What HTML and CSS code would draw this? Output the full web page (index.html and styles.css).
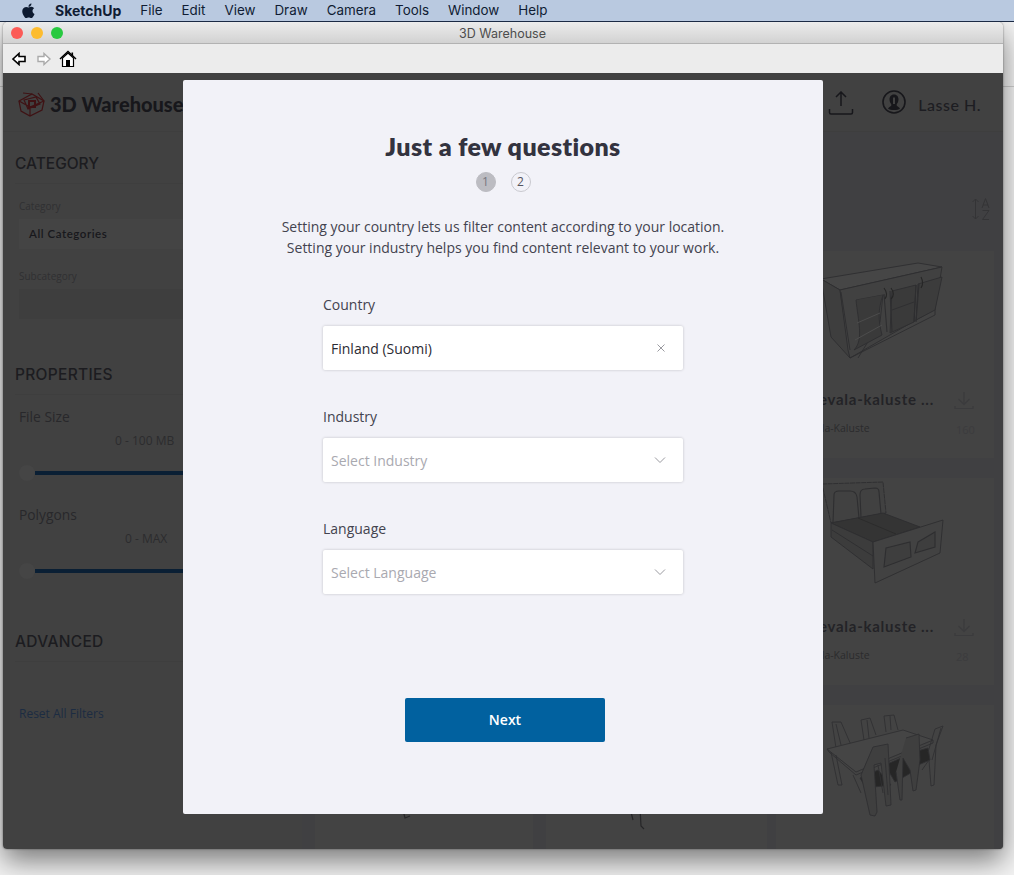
FILE: index.html
```html
<!DOCTYPE html>
<html lang="en">
<head>
<meta charset="utf-8">
<title>3D Warehouse</title>
<link rel="stylesheet" href="styles.css">
</head>
<body>
<nav class="menubar">
  <svg class="apple" viewBox="3 2.5 17 18.5"><path d="M17.05 20.28c-.98.95-2.05.8-3.08.35-1.09-.46-2.09-.48-3.24 0-1.44.62-2.2.44-3.06-.35C2.79 15.25 3.51 7.59 9.05 7.31c1.35.07 2.29.74 3.08.8 1.18-.24 2.31-.93 3.57-.84 1.51.12 2.65.72 3.4 1.8-3.12 1.87-2.38 5.98.48 7.13-.57 1.5-1.31 2.99-2.54 4.09zM12.03 7.25c-.15-2.23 1.66-4.07 3.74-4.25.29 2.58-2.34 4.5-3.74 4.25z"/></svg>
  <b class="menu-app">SketchUp</b>
  <span>File</span><span>Edit</span><span>View</span><span>Draw</span><span>Camera</span><span>Tools</span><span>Window</span><span>Help</span>
</nav>

<div class="window">
  <div class="titlebar">
    <div class="lights"><i class="light red"></i><i class="light yellow"></i><i class="light green"></i></div>
    <span class="title-text">3D Warehouse</span>
  </div>
  <div class="toolbar">
    <svg class="tool" width="14" height="14" viewBox="0 0 14 14"><path d="M1 7 7 1.500V4.500H13V9.500H7V12.500Z" fill="#fff" stroke="#000" stroke-width="1.600"/></svg>
    <svg class="tool tool-fwd" width="14" height="14" viewBox="0 0 14 14"><path d="M13 7 7 1.500V4.500H1V9.500H7V12.500Z" fill="#fff" stroke="#aaa" stroke-width="1.400"/></svg>
    <svg class="tool tool-home" width="18" height="18" viewBox="0 0 18 18"><path d="M1 9 9 1.500 17 9" fill="none" stroke="#000" stroke-width="1.500"/><path d="M3.500 8V16.500H14.500V8L9 3Z" fill="#fff" stroke="#000" stroke-width="1.200"/><rect x="7" y="10" width="4" height="6.500" fill="#000"/><rect x="12.500" y="2.500" width="1.600" height="3.500" fill="#000"/></svg>
  </div>

  <div class="page">
    <header class="site-header">
      <svg class="logo" width="30" height="28" viewBox="0 0 30 28" fill="none" stroke="#3f1214" stroke-width="1.200"><path d="M2 11 15 4 27 11 25 20 13 26 4 21Z"/><path d="M2 11 13 17 27 11M13 17V26M6 3 15 4M21 3 27 11M7 10 19 7 23 14 11 19Z"/><path d="M12 11H18V17H12Z" stroke-width="2"/></svg>
      <span class="logo-text">3D Warehouse</span>
      <div class="header-right">
        <svg width="26" height="24" viewBox="0 0 26 24" fill="none" stroke="#17171b" stroke-width="1.500"><path d="M13 1V15M8 6 13 1 18 6"/><path d="M1.500 18V21.500Q1.500 23 3 23H23Q24.500 23 24.500 21.500V18"/></svg>
        <svg class="avatar" width="24" height="24" viewBox="0 0 24 24"><circle cx="12" cy="12" r="11" fill="none" stroke="#17171b" stroke-width="1.600"/><path d="M12 4.500C8.800 4.500 7.500 7 7.500 9.500 7.500 12 9 13.500 9.500 15 9 16.500 7 17 6 18.500 8 20.500 16 20.500 18 18.500 17 17 15 16.500 14.500 15 15 13.500 16.500 12 16.500 9.500 16.500 7 15.200 4.500 12 4.500Z" fill="#17171b"/><path d="M11 7.500H13V14H11Z" fill="#414141"/></svg>
        <span class="user">Lasse H.</span>
      </div>
    </header>

    <div class="body-row">
      <aside class="sidebar">
        <h2 class="side-head">CATEGORY</h2>
        <div class="field-label">Category</div>
        <div class="side-select">All Categories</div>
        <div class="field-label field-label-2">Subcategory</div>
        <div class="side-select side-select-empty"></div>

        <h2 class="side-head side-head-props">PROPERTIES</h2>
        <div class="prop-label">File Size</div>
        <div class="prop-value">0 - 100 MB</div>
        <div class="slider"><i class="knob"></i><i class="track"></i></div>
        <div class="prop-label prop-label-2">Polygons</div>
        <div class="prop-value prop-value-2">0 - MAX</div>
        <div class="slider"><i class="knob"></i><i class="track"></i></div>

        <h2 class="side-head side-head-adv">ADVANCED</h2>
        <a class="reset">Reset All Filters</a>
      </aside>

      <main class="results">
        <div class="sort-row">
          <svg width="20" height="24" viewBox="0 0 20 24" fill="none" stroke="#343436" stroke-width="1"><path d="M4.500 2V22M1.500 5 4.500 2 7.500 5M1.500 19 4.500 22 7.500 19"/><path d="M11 11 14.500 1.500 18 11M12.200 8H16.800M11.500 13.500H18L11.500 22.500H18"/></svg>
        </div>
        <div class="grid">
          <article class="card"></article>
          <article class="card card-mid"></article>
          <article class="card">
            <svg class="thumb" viewBox="778 251 218 136" fill="none" stroke="#2e2e30" stroke-width=".9">
              <path d="M823 279 920 263 944 267 842 290Z" fill="#464646"/>
              <path d="M823 279 833 337 852 358 842 290Z" fill="#3e3e3e"/>
              <path d="M842 290 944 267 937 309 852 358 850 350Z" fill="#414141"/>
              <path d="M852 358 937 315 937 309M843 292 852 350M858 300 885 295 882 322 860 358"/>
              <path d="M858 300C860 320 866 340 856 350L884 335C880 320 880 310 885 295" fill="#3a3a3a"/>
              <path d="M859 323 882 313M857 340 884 325" stroke="#4e4e4e"/>
              <path d="M894 291 918 285 916 322 892 333Z" fill="#3a3a3a"/>
              <path d="M894 310 916 302M920 284 944 277 937 310 918 320Z" fill="#3c3c3c"/>
              <path d="M886 294 889 332M892 291 894 332M918 285 916 322M921 284 918 322" stroke-width="1.100"/>
              <path d="M886 288C889 292 889 296 887 299M893 288C896 292 896 296 893 299M923 277C925 281 925 285 923 288" stroke="#262626" stroke-width="1.100"/>
            </svg>
            <div class="meta"><div class="card-title">Sevala-kaluste ...</div><div class="card-author">Sevala-Kaluste</div>
              <svg class="dl" width="20" height="19" viewBox="0 0 20 19" fill="none" stroke="#3b3b3d" stroke-width="1.200"><path d="M10 1V13M4.500 8 10 13.500 15.500 8M1 15V17.500H19V15"/></svg>
              <div class="count">160</div>
            </div>
          </article>

          <article class="card"></article>
          <article class="card card-mid"></article>
          <article class="card">
            <svg class="thumb" viewBox="778 478 218 136" fill="none" stroke="#2e2e30" stroke-width=".9">
              <path d="M824 484 885 482 888 513 833 523Z" fill="#414141" stroke-dasharray="5 .6"/>
              <path d="M835 523 836 495Q836 491 841 491L852 491Q858 491 859 497L861 518M863 517 862 495Q862 489 867 489L877 488Q881 488 881 492L883 514" stroke-width="1.100"/>
              <path d="M833 523 885 513 922 527 875 542Z" fill="#343434"/>
              <path d="M860 518 898 534" stroke="#2a2a2a"/>
              <path d="M833 523 833 537 875 569 875 542Z" fill="#3c3c3c"/>
              <path d="M834 530 875 556"/>
              <path d="M875 542 945 520 942 553 877 583Z" fill="#424242"/>
              <path d="M888 548 912 542 913 557 886 567Z" fill="#3e3e3e" stroke-width="1.100"/>
              <path d="M920 542 937 532 937 547 917 553Z" fill="#3e3e3e" stroke-width="1.100"/>
            </svg>
            <div class="meta"><div class="card-title">Sevala-kaluste ...</div><div class="card-author">Sevala-Kaluste</div>
              <svg class="dl" width="20" height="19" viewBox="0 0 20 19" fill="none" stroke="#3b3b3d" stroke-width="1.200"><path d="M10 1V13M4.500 8 10 13.500 15.500 8M1 15V17.500H19V15"/></svg>
              <div class="count">28</div>
            </div>
          </article>

          <article class="card"><svg class="thumb" viewBox="315 705 218 136" fill="none" stroke="#262628" stroke-width="1.200"><path d="M403 810 405 818 410 816"/></svg></article>
          <article class="card card-mid"><svg class="thumb" viewBox="546 705 221 136" fill="none" stroke="#262628" stroke-width="1.200"><path d="M630 808 633 820M640 808 641 826 644 829"/></svg></article>
          <article class="card">
            <svg class="thumb" viewBox="778 705 218 136" fill="none" stroke="#303032" stroke-width=".9">
              <path d="M834 722 843 722 853 745M834 722 838 748M838 724 843 745M863 720 872 718 878 735M863 720 866 740M869 720 871 738M886 716 896 715 900 730M886 716 888 732M892 716 893 730"/>
              <path d="M829 749 905 730 935 740 858 772Z" fill="#454545"/>
              <path d="M829 749 831 752 858 775 935 743 935 740"/>
              <path d="M833 752 840 785 844 785 838 755M855 775 863 793"/>
              <path d="M862 778 880 770 893 785 868 788Z" fill="#262626"/>
              <path d="M887 765 910 755 918 770 897 782Z" fill="#262626"/>
              <path d="M916 752 930 748 932 760 920 765Z" fill="#262626"/>
              <path d="M875 747 890 744 893 805 888 806 883 763 876 765 879 812 877 816 872 815 863 775 875 747" fill="#3f3f3f"/>
              <path d="M880 765 885 793M887 758 890 795"/>
              <path d="M908 738 921 734 922 760 918 790 915 791 912 770 905 758 904 800 902 800 898 772" fill="#3f3f3f"/>
              <path d="M937 729 945 726 938 745 936 785 933 786 931 760 924 770"/>
              <path d="M937 729 930 752M943 728 934 760"/>
            </svg>
          </article>
        </div>
      </main>
    </div>

    <section class="modal">
      <h1 class="modal-title">Just a few questions</h1>
      <div class="steps"><span class="step step-on">1</span><span class="step">2</span></div>
      <p class="intro">Setting your country lets us filter content according to your location.<br>Setting your industry helps you find content relevant to your work.</p>
      <div class="form">
        <label class="form-label">Country</label>
        <div class="input input-value">Finland (Suomi)
          <svg width="10" height="10" viewBox="0 0 10 10" stroke="#9a9aa0" fill="none"><path d="M1.500 1.500 8.500 8.500M8.500 1.500 1.500 8.500"/></svg>
        </div>
        <label class="form-label">Industry</label>
        <div class="input">Select Industry
          <svg class="chev" width="12" height="8" viewBox="0 0 12 8" stroke="#9a9aa0" fill="none"><path d="M1 1.500 6 6.500 11 1.500"/></svg>
        </div>
        <label class="form-label">Language</label>
        <div class="input">Select Language
          <svg class="chev" width="12" height="8" viewBox="0 0 12 8" stroke="#9a9aa0" fill="none"><path d="M1 1.500 6 6.500 11 1.500"/></svg>
        </div>
      </div>
      <button class="next">Next</button>
    </section>
  </div>
</div>
</body>
</html>
```

FILE: styles.css
```css
* { box-sizing: border-box; }
html, body { height: 100%; }
body {
  margin: 0;
  height: 875px;
  overflow: hidden;
  background: linear-gradient(#cfcfcf, #cfcfcf) 0 86px / 100% 1px no-repeat, #f4f4f4;
  font-family: "Open Sans", "Noto Sans", sans-serif;
}
.menubar {
  position: relative;
  z-index: 1;
  height: 22px;
  background: #b9c9e0;
  border-bottom: 1px solid #1b2a44;
  display: flex;
  align-items: center;
  gap: 19px;
  padding-left: 21px;
  font: 13.400px/21px Inter, "Liberation Sans", sans-serif;
  color: #101c33;
}
.apple { width: 14px; height: 15px; fill: #0d1a30; margin-right: 1px; flex: none; }
.menu-app { font-weight: 700; font-size: 14px; }
.window {
  width: 1000px;
  height: 827px;
  margin-left: 3px;
  border-radius: 5px 5px 4px 4px;
  overflow: hidden;
  position: relative;
  box-shadow: 0 12px 28px rgba(0, 0, 0, .5), 0 0 2px rgba(0, 0, 0, .5);
}
.titlebar {
  height: 22px;
  background: linear-gradient(#ececec, #d2d2d2);
  border-bottom: 1px solid #b2b2b2;
  position: relative;
  display: flex;
  justify-content: center;
  align-items: center;
  padding: 2px 1px 0 0;
}
.lights { position: absolute; left: 8px; top: 5px; display: flex; gap: 8px; }
.light { width: 12px; height: 12px; border-radius: 50%; }
.red { background: #fc5b57; }
.yellow { background: #fdbc2e; }
.green { background: #28c940; }
.title-text { font: 12.500px Inter, "Liberation Sans", sans-serif; color: #4d4d4d; }
.toolbar {
  height: 29px;
  background: #ececec;
  display: flex;
  align-items: center;
  padding: 1px 0 0 9px;
}
.tool-fwd { margin-left: 11px; }
.tool-home { margin-left: 8px; }

.page { height: 776px; background: #414141; position: relative; overflow: hidden; }
.site-header {
  height: 59px;
  display: flex;
  align-items: center;
  padding: 4px 22px 0 14px;
  border-bottom: 1px solid #3e3e3e;
}
.logo { flex: none; }
.logo-text { font: 900 20px Lato, sans-serif; color: #17171b; margin-left: 3px; white-space: nowrap; }
.header-right { margin-left: auto; display: flex; align-items: center; }
.header-right > svg:first-child { margin-bottom: 2px; }
.avatar { margin-left: 28px; margin-bottom: 4px; }
.user { font: 500 16px Lato, sans-serif; color: #1d1d22; margin-left: 12px; letter-spacing: .5px; }

.body-row { display: flex; height: 717px; }
.sidebar { width: 299px; flex: none; padding: 21px 0 0 12px; color: #1e1e22; }
.side-head {
  font: 500 15.500px/21px Inter, sans-serif;
  letter-spacing: .3px;
  margin: 0;
  color: #1c1c20;
  padding-bottom: 9px;
  border-bottom: 1px solid #3e3e3e;
}
.side-head:first-child { letter-spacing: 0; }
.field-label { font-size: 10px; line-height: 14px; color: #303032; margin: 15px 0 0 4px; height: 20px; }
.field-label-2 { margin-top: 20px; }
.side-select {
  margin-left: 4px;
  height: 30px;
  background: #444;
  font: 600 11.500px/30px Lato, sans-serif;
  letter-spacing: .55px;
  color: #18181c;
  padding-left: 10px;
}
.side-select-empty { background: #3e3e3e; }
.side-head-props { margin-top: 45px; }
.prop-label { font-size: 13.800px; line-height: 18px; margin: 13px 0 0 4px; color: #28282b; }
.prop-label-2 { margin-top: 25px; }
.prop-value { font-size: 12px; line-height: 16px; color: #2c2c2e; margin: 7px 0 0 100px; height: 16px; }
.prop-value-2 { margin-left: 110px; }
.slider { display: flex; align-items: center; margin: 16px 0 0 4px; height: 16px; }
.knob { width: 16px; height: 16px; border-radius: 50%; background: #454545; flex: none; }
.track { width: 300px; height: 4px; background: #0a1f34; flex: none; }
.side-head-adv { margin-top: 52px; }
.reset { display: block; margin: 44px 0 0 4px; font-size: 12px; line-height: 16px; color: #1c2c42; }

.results { flex: 1; background: #404042; padding: 0 7px 0 13px; }
.sort-row { height: 119px; display: flex; justify-content: flex-end; padding: 65px 5px 0 0; }
.grid {
  display: grid;
  grid-template-columns: 218px 221px 218px;
  grid-auto-rows: 207px;
  column-gap: 11px;
  row-gap: 20px;
}
.card-mid { margin-left: 2px; margin-right: -2px; }
.card { background: #434343; position: relative; }
.thumb { display: block; width: 100%; height: 136px; overflow: visible; }
.card-mid .thumb { width: 221px; }
.meta { position: relative; }
.card-title {
  font: 700 15px/24px Lato, sans-serif;
  letter-spacing: .75px;
  color: #232327;
  width: 158px;
  text-align: right;
  white-space: nowrap;
}
.card-author { font-size: 10.500px; line-height: 14px; color: #2b2b2d; margin: 10px 0 0 23px; white-space: nowrap; }
.dl { position: absolute; left: 178px; top: 4px; }
.count { position: absolute; left: 180px; top: 35px; font-size: 11px; color: #3c3c3e; }

.modal {
  position: absolute;
  left: 180px;
  top: 7px;
  width: 640px;
  height: 734px;
  background: #f2f2f8;
  border-radius: 2px;
  display: flex;
  flex-direction: column;
  align-items: center;
  padding-top: 49px;
}
.modal-title { margin: 0; font: 800 25px/34px Lato, sans-serif; color: #33333f; letter-spacing: .4px; }
.steps { display: flex; gap: 15px; margin-top: 9px; }
.step {
  width: 20px; height: 20px;
  border-radius: 50%;
  border: 1px solid #c9c9cf;
  font-size: 12px;
  line-height: 18px;
  text-align: center;
  color: #55555f;
}
.step-on { background: #bcbcc2; border-color: #bcbcc2; color: #77777f; }
.intro { margin: 24px 0 0; font-size: 14px; line-height: 21px; color: #43434f; text-align: center; }
.form { width: 360px; margin-top: 37px; }
.form-label { display: block; font-size: 14px; line-height: 20px; height: 31px; color: #43434f; }
.input {
  height: 44px;
  background: #fff;
  border-radius: 2px;
  box-shadow: 0 0 3px rgba(0, 0, 0, .2);
  padding: 0 17px 0 8px;
  display: flex;
  align-items: center;
  justify-content: space-between;
  font-size: 14px;
  color: #a9a9b0;
  margin-bottom: 37px;
}
.input-value { color: #2b2b33; }
.input svg { flex: none; }
.next {
  margin-top: 67px;
  margin-left: 4px;
  width: 200px;
  height: 44px;
  border: 0;
  border-radius: 2px;
  padding: 0 0 2px;
  background: #01619f;
  color: #fff;
  font: 600 14px "Open Sans", sans-serif;
}
```
